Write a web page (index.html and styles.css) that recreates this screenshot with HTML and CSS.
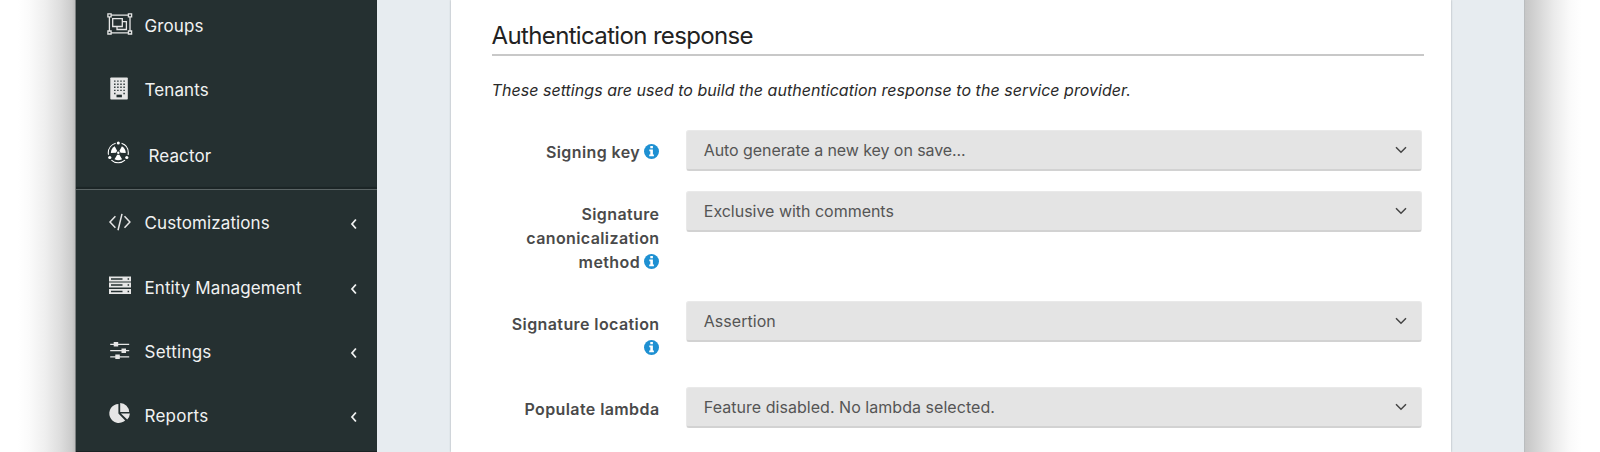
FILE: index.html
```
<!DOCTYPE html>
<html lang="en">
<head>
<meta charset="utf-8">
<title>Authentication response</title>
<link rel="stylesheet" href="styles.css">
</head>
<body>
<div class="window">
  <nav class="sidebar">
    <ul class="menu menu-top">
      <li class="item">
        <svg class="icon" viewBox="0 0 26 26" fill="none" stroke="#e6e6e6" stroke-width="1.3"><path d="M4 2.2h17.5M4 19.8h17.5M2.4 4v14M23 4v14"/><path d="M.9.9h3.2v3H.9zM21.4.9h3.2v3h-3.2zM.9 18h3.2v3H.9zM21.4 18h3.2v3h-3.2z"/><path d="M5.7 5.7h9.6v7.8H5.7zM15.3 8.7h4.1v7.8H10v-3"/></svg>
        <span class="text">Groups</span>
      </li>
      <li class="item">
        <svg class="icon" viewBox="0 0 26 26"><rect x="3.3" y=".5" width="17.5" height="22" rx=".8" fill="#e6e6e6"/><path d="M7.1 4.1h11M7.1 7.2h11M7.1 10.3h11M7.1 13.4h11" stroke="#253031" stroke-width="1.4" stroke-dasharray="1.4 1.7"/><path d="M7.1 16.5h1.4M16.4 16.5h1.4" stroke="#253031" stroke-width="1.4"/><path d="M9.5 17.7h5.4v2.6H9.5z" fill="#253031"/></svg>
        <span class="text">Tenants</span>
      </li>
      <li class="item item-last">
        <svg class="icon" viewBox="0 0 26 26" fill="#fff"><circle cx="11.3" cy="9.8" r="10" fill="none" stroke="#fff" stroke-width="1.1" stroke-dasharray="14.9 6.04" stroke-dashoffset="-8.26"/><circle cx="11.3" cy="0" r="1.5"/><circle cx="2.8" cy="14.5" r="1.6"/><circle cx="19.8" cy="14.5" r="1.6"/><circle cx="11.3" cy="9.8" r="1.2"/><path id="blade" d="M10.2 11.8h2.2l2.7 4.4q-3.8 2-7.6 0z"/><use href="#blade" transform="rotate(120 11.3 9.8)"/><use href="#blade" transform="rotate(240 11.3 9.8)"/></svg>
        <span class="text reactor">Reactor</span>
      </li>
    </ul>
    <ul class="menu">
      <li class="item">
        <svg class="icon" viewBox="0 0 26 26" fill="none" stroke="#e6e6e6" stroke-width="1.5"><path d="M8.4 6.3 3 12l5.4 5.7M17.5 6.3l5.4 5.7-5.4 5.7M15 3.9l-4 16.4"/></svg>
        <span class="text">Customizations</span>
        <svg class="arrow" viewBox="0 0 8 12"><path d="M5.9 1.5 2 6l3.9 4.5"/></svg>
      </li>
      <li class="item">
        <svg class="icon" viewBox="0 0 26 26"><path d="M2 1.4h22v5H2zM2 7.6h22v5H2zM2 13.9h22v5.2H2z" fill="#e6e6e6"/><path d="M4 3.9h11.5M4 10.1h11.5M4 16.4h11.5M20.6 3.9h1.5M20.6 10.1h1.5M20.6 16.4h1.5" stroke="#253031" stroke-width="1.5"/></svg>
        <span class="text">Entity Management</span>
        <svg class="arrow" viewBox="0 0 8 12"><path d="M5.9 1.5 2 6l3.9 4.5"/></svg>
      </li>
      <li class="item">
        <svg class="icon" viewBox="0 0 26 26"><path d="M3.2 5.4h19M3.2 11.7h19M3.2 17.9h19" stroke="#e6e6e6" stroke-width="1.3"/><path d="M6.7 3.1h4.5v4.5H6.7zM14.5 9.4H19v4.5h-4.5zM8.3 15.6h4.5v4.5H8.3z" fill="#e6e6e6"/></svg>
        <span class="text wide">Settings</span>
        <svg class="arrow" viewBox="0 0 8 12"><path d="M5.9 1.5 2 6l3.9 4.5"/></svg>
      </li>
      <li class="item">
        <svg class="icon" viewBox="0 0 26 26" fill="#e6e6e6"><path d="M11.4.9v9.6l6.8 6.9A9.5 9.5 0 1 1 11.4.9z"/><path d="M13.2 0a9.3 9.3 0 0 1 9 9h-9zM13.9 10.4h9a9.6 9.6 0 0 1-2.7 6.2z"/></svg>
        <span class="text wide">Reports</span>
        <svg class="arrow" viewBox="0 0 8 12"><path d="M5.9 1.5 2 6l3.9 4.5"/></svg>
      </li>
    </ul>
  </nav>
  <main class="panel">
    <h1 class="title">Authentication response</h1>
    <p class="intro">These settings are used to build the authentication response to the service provider.</p>
    <div class="row">
      <label class="label">Signing key <svg class="info" viewBox="0 0 15 15"><circle cx="7.5" cy="7.5" r="7.5"/><path d="M6.3 2h2.6v2.2H6.3zM5.3 5.6h3.6v5h1v1.7H5.2v-1.7h1.1V7.3h-1z"/></svg></label>
      <div class="select"><span class="generated">Auto generate a new key on save...</span><svg class="chevron" viewBox="0 0 12 8"><path d="m1 1.3 5 5 5-5"/></svg></div>
    </div>
    <div class="row">
      <label class="label">Signature<br>canonicalization<br>method <svg class="info" viewBox="0 0 15 15"><circle cx="7.5" cy="7.5" r="7.5"/><path d="M6.3 2h2.6v2.2H6.3zM5.3 5.6h3.6v5h1v1.7H5.2v-1.7h1.1V7.3h-1z"/></svg></label>
      <div class="select"><span class="exclusive">Exclusive with comments</span><svg class="chevron" viewBox="0 0 12 8"><path d="m1 1.3 5 5 5-5"/></svg></div>
    </div>
    <div class="row">
      <label class="label">Signature location<br><svg class="info" viewBox="0 0 15 15"><circle cx="7.5" cy="7.5" r="7.5"/><path d="M6.3 2h2.6v2.2H6.3zM5.3 5.6h3.6v5h1v1.7H5.2v-1.7h1.1V7.3h-1z"/></svg></label>
      <div class="select"><span>Assertion</span><svg class="chevron" viewBox="0 0 12 8"><path d="m1 1.3 5 5 5-5"/></svg></div>
    </div>
    <div class="row">
      <label class="label">Populate lambda</label>
      <div class="select"><span>Feature disabled. No lambda selected.</span><svg class="chevron" viewBox="0 0 12 8"><path d="m1 1.3 5 5 5-5"/></svg></div>
    </div>
  </main>
</div>
</body>
</html>
```
FILE: styles.css
```
* { box-sizing: border-box; }
body {
  margin: 0;
  height: 452px;
  overflow: hidden;
  font-family: Inter, "Liberation Sans", sans-serif;
  padding: 0 75px;
  background: linear-gradient(to right, #fff 18px, #fafafa 30px, #efefef 45px, #dedede 60px, #cbcbcb 72px, #bdbdbd 75px, #fff 75px, #fff 1525px, #c6c6c6 1525px, #d6d6d6 1538px, #ebebeb 1554px, #fafafa 1570px, #fff 1582px);
}
.window {
  display: flex;
  height: 452px;
  background: #e7ecf0;
  border-left: 1px solid #7c8080;
  border-right: 1px solid #b9bcbe;
}
.sidebar {
  width: 301px;
  height: 452px;
  flex: none;
  background: #253031;
  border-bottom: 1px solid #1a2324;
  overflow: hidden;
}
.menu { list-style: none; margin: 0; padding: 0; }
.menu-top {
  margin-top: -6px;
  height: 196px;
  border-bottom: 1px solid #5b6465;
  margin-bottom: 1px;
  box-shadow: inset 0 -2px 1px #1c2526;
}
.item {
  display: flex;
  align-items: center;
  height: 64.4px;
  padding: 0 19px 0 31px;
  color: #f1f2f2;
  font-size: 17px;
  letter-spacing: 0.1px;
}
.menu-top .item { height: 64px; }
.menu-top .item-last { height: 68px; }
.icon { width: 26px; height: 26px; flex: none; margin-right: 11.5px; overflow: visible; }
.text { line-height: 24px; white-space: nowrap; }
.wide { letter-spacing: 0.25px; }
.reactor { margin-left: 4px; }
.arrow { width: 8px; height: 12px; margin-left: auto; position: relative; top: 1px; }
.arrow path { fill: none; stroke: #f1f2f2; stroke-width: 1.8; }
.panel {
  width: 1000px;
  height: 452px;
  margin-left: 74px;
  padding: 19px 27px 0 40.6px;
  background: #fff;
  box-shadow: 0 0 2px #9fa6aa;
}
.title {
  margin: 0;
  height: 37px;
  border-bottom: 2px solid #c8c8c8;
  color: #222;
  font-size: 24px;
  font-weight: 400;
  line-height: 33px;
  letter-spacing: -0.65px;
}
.intro {
  margin: 22px 0 26.5px;
  color: #2a2a2a;
  font-size: 16px;
  line-height: 25px;
  font-style: italic;
  letter-spacing: 0.035px;
  white-space: nowrap;
}
.row {
  display: grid;
  grid-template-columns: 167.9px 736px;
  column-gap: 26.3px;
  padding-bottom: 20.8px;
}
.row:nth-of-type(n+2) .label { padding-bottom: 5.8px; }
.label {
  padding-top: 10.5px;
  color: #4a4a4a;
  font-size: 16px;
  font-weight: 600;
  line-height: 24.3px;
  letter-spacing: 0.4px;
  text-align: right;
}
.row:nth-of-type(1) .label { margin-bottom: -9px; }
.info { width: 15px; height: 15px; vertical-align: -1px; }
.info circle { fill: #1e90d2; }
.info path { fill: #fff; }
.select {
  display: flex;
  align-items: center;
  justify-content: space-between;
  height: 41px;
  padding: 0 13.5px 0 17px;
  border: 1px solid #e9e9e9;
  border-bottom: 2px solid #d2d2d2;
  border-radius: 3px;
  background: #e4e4e4;
  color: #555;
  font-size: 16px;
  letter-spacing: 0.04px;
}
.generated { letter-spacing: -0.08px; }
.exclusive { letter-spacing: -0.02px; }
.chevron { width: 12px; height: 8px; }
.chevron path { fill: none; stroke: #444; stroke-width: 1.5; }
```
